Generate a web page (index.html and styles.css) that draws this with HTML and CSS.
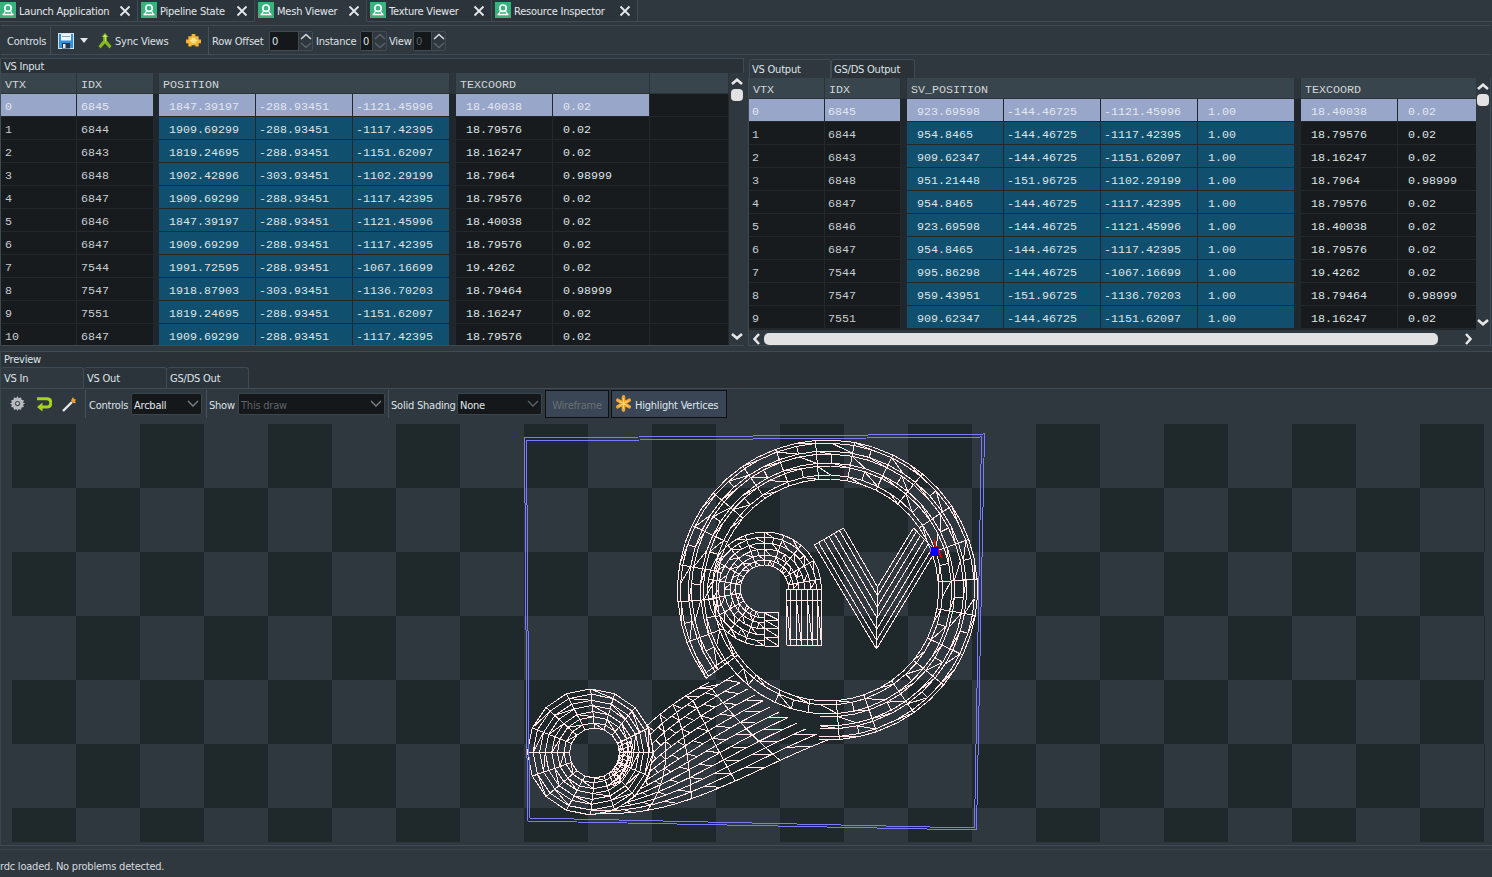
FILE: index.html
```html
<!DOCTYPE html>
<html lang="en">
<head>
<meta charset="utf-8">
<title>RenderDoc Mesh Viewer</title>
<link rel="stylesheet" href="styles.css">
</head>
<body>
<svg class="defs" width="0" height="0" aria-hidden="true">
  <symbol id="tabicon" viewBox="0 0 16 16">
    <rect width="16" height="16" fill="#3bb27b"/>
    <circle cx="8" cy="6.2" r="3.2" fill="none" stroke="#fff" stroke-width="1.7"/>
    <path d="M2.5 12.5h11" stroke="#fff" stroke-width="1.6"/>
    <path d="M3.5 12.5 5.5 9M12.5 12.5 10.5 9" stroke="#fff" stroke-width="1.2"/>
  </symbol>
  <symbol id="close" viewBox="0 0 12 12">
    <path d="M1.5 1.5 10.5 10.5M10.5 1.5 1.5 10.5" stroke="#e6e8ea" stroke-width="1.8" fill="none"/>
  </symbol>
  <symbol id="up" viewBox="0 0 12 7">
    <path d="M1 6 6 1.5 11 6" fill="none" stroke="currentColor" stroke-width="1.6"/>
  </symbol>
  <symbol id="down" viewBox="0 0 12 7">
    <path d="M1 1 6 5.5 11 1" fill="none" stroke="currentColor" stroke-width="1.6"/>
  </symbol>
  <symbol id="upb" viewBox="0 0 12 7">
    <path d="M1 6 6 1.7 11 6" fill="none" stroke="currentColor" stroke-width="2.6"/>
  </symbol>
  <symbol id="downb" viewBox="0 0 12 7">
    <path d="M1 1 6 5.300 11 1" fill="none" stroke="currentColor" stroke-width="2.6"/>
  </symbol>
</svg>

<nav class="tabbar">
  <div class="tab tab-a"><svg class="ticon"><use href="#tabicon"/></svg><span class="tlabel">Launch Application</span><svg class="tclose"><use href="#close"/></svg></div>
  <div class="tab tab-b"><svg class="ticon"><use href="#tabicon"/></svg><span class="tlabel">Pipeline State</span><svg class="tclose"><use href="#close"/></svg></div>
  <div class="tab tab-c active"><svg class="ticon"><use href="#tabicon"/></svg><span class="tlabel">Mesh Viewer</span><svg class="tclose"><use href="#close"/></svg></div>
  <div class="tab tab-d"><svg class="ticon"><use href="#tabicon"/></svg><span class="tlabel">Texture Viewer</span><svg class="tclose"><use href="#close"/></svg></div>
  <div class="tab tab-e"><svg class="ticon"><use href="#tabicon"/></svg><span class="tlabel">Resource Inspector</span><svg class="tclose"><use href="#close"/></svg></div>
</nav>

<section class="toolbar">
  <span class="lbl w-controls">Controls</span>
  <span class="sep"></span>
  <svg class="ic ic-save" viewBox="0 0 16 16"><rect x=".5" y=".5" width="15" height="15" fill="#2f8fe0" stroke="#cfe4f7"/><rect x="3" y="1" width="10" height="6.5" fill="#f4f7fa"/><rect x="4" y="3" width="8" height="1" fill="#7fa8cc"/><rect x="4" y="10" width="8" height="5.5" fill="#24384e"/><rect x="5" y="11" width="2.5" height="4" fill="#dfe8ef"/></svg>
  <svg class="ic ic-caret" viewBox="0 0 8 5"><path d="M0 0h8L4 5z" fill="#e4e6e8"/></svg>
  <svg class="ic ic-sync" viewBox="0 0 14 16"><path d="M7 0 10.500 4H8.800V7.500L13.500 13 11.500 15.500 7 10.500 2.500 15.500.5 13 5.200 7.500V4H3.500z" fill="#86b81f"/><path d="M7 1.500 8.800 3.800H7.800V8L7 9V3.800H5.200z" fill="#d4ec7c"/></svg>
  <span class="lbl w-sync">Sync Views</span>
  <svg class="ic ic-puzzle" viewBox="0 0 16 16"><path d="M6 1h4v2.500h3.500V7H16v4h-2.500v3.500H10V13H6v1.500H2.500V11H0V7h2.500V3.500H6z" fill="#f5b731"/><path d="M6 5h4v2h2v2h-2v2H6V9H4V7h2z" fill="#fbe08a"/></svg>
  <span class="sep sep-b"></span>
  <span class="lbl w-row">Row Offset</span>
  <div class="spin w-spin1"><span class="spin-val">0</span><span class="spin-btns"><svg><use href="#up"/></svg><svg class="dim"><use href="#down"/></svg></span></div>
  <span class="lbl w-inst">Instance</span>
  <div class="spin w-spin2"><span class="spin-val">0</span><span class="spin-btns"><svg class="dim"><use href="#up"/></svg><svg class="dim"><use href="#down"/></svg></span></div>
  <span class="lbl w-view">View</span>
  <div class="spin w-spin3"><span class="spin-val dimtext">0</span><span class="spin-btns"><svg><use href="#up"/></svg><svg class="dim"><use href="#down"/></svg></span></div>
</section>

<main class="panes">
  <section class="pane pane-left">
    <header class="pane-title">VS Input</header>
    <div class="grid-wrap">
      <div class="table left-table">
        <div class="row head"><span>VTX</span><span>IDX</span><span class="sp"></span><span class="s3">POSITION</span><span class="sp"></span><span class="s2">TEXCOORD</span><span class="end"></span></div>
        <div class="rows">
          <div class="row sel"><span>0</span><span>6845</span><span class="sp"></span><span class="b">1847.39197</span><span class="b n">-288.93451</span><span class="b n">-1121.45996</span><span class="sp"></span><span class="v">18.40038</span><span class="v">0.02</span><span class="end"></span></div>
          <div class="row"><span>1</span><span>6844</span><span class="sp"></span><span class="b">1909.69299</span><span class="b n">-288.93451</span><span class="b n">-1117.42395</span><span class="sp"></span><span class="v">18.79576</span><span class="v">0.02</span><span class="end"></span></div>
          <div class="row"><span>2</span><span>6843</span><span class="sp"></span><span class="b">1819.24695</span><span class="b n">-288.93451</span><span class="b n">-1151.62097</span><span class="sp"></span><span class="v">18.16247</span><span class="v">0.02</span><span class="end"></span></div>
          <div class="row"><span>3</span><span>6848</span><span class="sp"></span><span class="b">1902.42896</span><span class="b n">-303.93451</span><span class="b n">-1102.29199</span><span class="sp"></span><span class="v">18.7964</span><span class="v">0.98999</span><span class="end"></span></div>
          <div class="row"><span>4</span><span>6847</span><span class="sp"></span><span class="b">1909.69299</span><span class="b n">-288.93451</span><span class="b n">-1117.42395</span><span class="sp"></span><span class="v">18.79576</span><span class="v">0.02</span><span class="end"></span></div>
          <div class="row"><span>5</span><span>6846</span><span class="sp"></span><span class="b">1847.39197</span><span class="b n">-288.93451</span><span class="b n">-1121.45996</span><span class="sp"></span><span class="v">18.40038</span><span class="v">0.02</span><span class="end"></span></div>
          <div class="row"><span>6</span><span>6847</span><span class="sp"></span><span class="b">1909.69299</span><span class="b n">-288.93451</span><span class="b n">-1117.42395</span><span class="sp"></span><span class="v">18.79576</span><span class="v">0.02</span><span class="end"></span></div>
          <div class="row"><span>7</span><span>7544</span><span class="sp"></span><span class="b">1991.72595</span><span class="b n">-288.93451</span><span class="b n">-1067.16699</span><span class="sp"></span><span class="v">19.4262</span><span class="v">0.02</span><span class="end"></span></div>
          <div class="row"><span>8</span><span>7547</span><span class="sp"></span><span class="b">1918.87903</span><span class="b n">-303.93451</span><span class="b n">-1136.70203</span><span class="sp"></span><span class="v">18.79464</span><span class="v">0.98999</span><span class="end"></span></div>
          <div class="row"><span>9</span><span>7551</span><span class="sp"></span><span class="b">1819.24695</span><span class="b n">-288.93451</span><span class="b n">-1151.62097</span><span class="sp"></span><span class="v">18.16247</span><span class="v">0.02</span><span class="end"></span></div>
          <div class="row"><span>10</span><span>6847</span><span class="sp"></span><span class="b">1909.69299</span><span class="b n">-288.93451</span><span class="b n">-1117.42395</span><span class="sp"></span><span class="v">18.79576</span><span class="v">0.02</span><span class="end"></span></div>
        </div>
      </div>
      <div class="vscroll vscroll-left">
        <svg class="chev"><use href="#upb"/></svg>
        <span class="vthumb"></span>
        <span class="grow"></span>
        <svg class="chev"><use href="#downb"/></svg>
      </div>
    </div>
  </section>

  <section class="pane pane-right">
    <div class="subtabs">
      <span class="subtab active st-1">VS Output</span>
      <span class="subtab st-2">GS/DS Output</span>
    </div>
    <div class="grid-wrap right-wrap">
      <div class="table right-table">
        <div class="row head"><span>VTX</span><span>IDX</span><span class="sp"></span><span class="s4">SV_POSITION</span><span class="sp"></span><span class="s2">TEXCOORD</span></div>
        <div class="rows">
          <div class="row sel"><span>0</span><span>6845</span><span class="sp"></span><span class="b">923.69598</span><span class="b n">-144.46725</span><span class="b n">-1121.45996</span><span class="b">1.00</span><span class="sp"></span><span class="v">18.40038</span><span class="v">0.02</span></div>
          <div class="row"><span>1</span><span>6844</span><span class="sp"></span><span class="b">954.8465</span><span class="b n">-144.46725</span><span class="b n">-1117.42395</span><span class="b">1.00</span><span class="sp"></span><span class="v">18.79576</span><span class="v">0.02</span></div>
          <div class="row"><span>2</span><span>6843</span><span class="sp"></span><span class="b">909.62347</span><span class="b n">-144.46725</span><span class="b n">-1151.62097</span><span class="b">1.00</span><span class="sp"></span><span class="v">18.16247</span><span class="v">0.02</span></div>
          <div class="row"><span>3</span><span>6848</span><span class="sp"></span><span class="b">951.21448</span><span class="b n">-151.96725</span><span class="b n">-1102.29199</span><span class="b">1.00</span><span class="sp"></span><span class="v">18.7964</span><span class="v">0.98999</span></div>
          <div class="row"><span>4</span><span>6847</span><span class="sp"></span><span class="b">954.8465</span><span class="b n">-144.46725</span><span class="b n">-1117.42395</span><span class="b">1.00</span><span class="sp"></span><span class="v">18.79576</span><span class="v">0.02</span></div>
          <div class="row"><span>5</span><span>6846</span><span class="sp"></span><span class="b">923.69598</span><span class="b n">-144.46725</span><span class="b n">-1121.45996</span><span class="b">1.00</span><span class="sp"></span><span class="v">18.40038</span><span class="v">0.02</span></div>
          <div class="row"><span>6</span><span>6847</span><span class="sp"></span><span class="b">954.8465</span><span class="b n">-144.46725</span><span class="b n">-1117.42395</span><span class="b">1.00</span><span class="sp"></span><span class="v">18.79576</span><span class="v">0.02</span></div>
          <div class="row"><span>7</span><span>7544</span><span class="sp"></span><span class="b">995.86298</span><span class="b n">-144.46725</span><span class="b n">-1067.16699</span><span class="b">1.00</span><span class="sp"></span><span class="v">19.4262</span><span class="v">0.02</span></div>
          <div class="row"><span>8</span><span>7547</span><span class="sp"></span><span class="b">959.43951</span><span class="b n">-151.96725</span><span class="b n">-1136.70203</span><span class="b">1.00</span><span class="sp"></span><span class="v">18.79464</span><span class="v">0.98999</span></div>
          <div class="row"><span>9</span><span>7551</span><span class="sp"></span><span class="b">909.62347</span><span class="b n">-144.46725</span><span class="b n">-1151.62097</span><span class="b">1.00</span><span class="sp"></span><span class="v">18.16247</span><span class="v">0.02</span></div>
        </div>
      </div>
      <div class="vscroll vscroll-right">
        <svg class="chev"><use href="#upb"/></svg>
        <span class="vthumb"></span>
        <span class="grow"></span>
        <svg class="chev"><use href="#downb"/></svg>
      </div>
      <div class="hscroll">
        <svg class="hchev" viewBox="0 0 7 12"><path d="M6 1 1.500 6 6 11" fill="none" stroke="currentColor" stroke-width="2.600"/></svg>
        <span class="hthumb"></span>
        <svg class="hchev" viewBox="0 0 7 12"><path d="M1 1 5.500 6 1 11" fill="none" stroke="currentColor" stroke-width="2.600"/></svg>
      </div>
    </div>
  </section>
</main>

<section class="preview">
  <header class="pane-title preview-title">Preview</header>
  <div class="ptabs">
    <span class="ptab active pt-1">VS In</span>
    <span class="ptab pt-2">VS Out</span>
    <span class="ptab pt-3">GS/DS Out</span>
  </div>
  <div class="ptools">
    <svg class="pic pic-gear" viewBox="0 0 16 16"><path d="M8 0l1.300 2.300 2.500-.9.400 2.600 2.600.4-.9 2.500L16 8l-2.100 1.300.9 2.500-2.600.4-.4 2.600-2.500-.9L8 16l-1.300-2.100-2.500.9-.4-2.600-2.600-.4.9-2.500L0 8l2.100-1.100-.9-2.500 2.600-.4.4-2.600 2.500.9z" fill="#b9bcbf"/><circle cx="8" cy="8" r="2.800" fill="#4c5257"/><circle cx="8" cy="8" r="1.400" fill="#d8dadc"/></svg>
    <svg class="pic pic-arrow" viewBox="0 0 16 16"><path d="M1 2.800h10c3 0 3.800 1.700 3.800 4s-.8 4.200-3.800 4.200H4" fill="none" stroke="#a5d41c" stroke-width="3"/><path d="M6.500 6.500 1 11 6.500 15.500z" fill="#a5d41c"/></svg>
    <svg class="pic pic-wand" viewBox="0 0 16 16"><path d="M1 15 10 6" stroke="#e8e8e8" stroke-width="2.400"/><path d="M10 6 12.500 3.500" stroke="#8e8e8e" stroke-width="2"/><path d="M11 1l1 2 2 .5-1 2 1 1.500-2.500.2-1-1.500-1.500-1.200z" fill="#f0a030"/></svg>
    <span class="sep sep-p1"></span>
    <span class="lbl w-pctl">Controls</span>
    <div class="combo w-c1"><span>Arcball</span><svg class="cchev" viewBox="0 0 12 7"><path d="M1 1 6 6 11 1" fill="none" stroke="#7d8388" stroke-width="1.300"/></svg></div>
    <span class="sep sep-p2"></span>
    <span class="lbl w-show">Show</span>
    <div class="combo w-c2"><span class="dimtext">This draw</span><svg class="cchev" viewBox="0 0 12 7"><path d="M1 1 6 6 11 1" fill="none" stroke="#7d8388" stroke-width="1.300"/></svg></div>
    <span class="sep sep-p3"></span>
    <span class="lbl w-solid">Solid Shading</span>
    <div class="combo w-c3"><span>None</span><svg class="cchev" viewBox="0 0 12 7"><path d="M1 1 6 6 11 1" fill="none" stroke="#5d6368" stroke-width="1.300"/></svg></div>
    <button class="btn btn-wire" type="button"><span class="btn-text">Wireframe</span></button>
    <button class="btn btn-high" type="button"><svg class="star" viewBox="0 0 16 16"><path d="M8 8V1.800M8 8V14.200M8 8 13.400 4.900M8 8 13.400 11.100M8 8 2.600 4.900M8 8 2.600 11.100" stroke="#f0a32c" stroke-width="3.400" stroke-linecap="round" fill="none"/><path d="M8 8V2.500M8 8V13.500M8 8 12.700 5.300M8 8 12.700 10.700M8 8 3.300 5.300M8 8 3.300 10.700" stroke="#fbd67c" stroke-width="1" fill="none"/></svg><span class="btn-text">Highlight Vertices</span></button>
  </div>
  <div class="canvas" id="canvas">
    <svg class="mesh" id="mesh" viewBox="12 424 1472 418" aria-hidden="true"></svg>
  </div>
</section>

<footer class="status">rdc loaded. No problems detected.</footer>

<script src="mesh.js"></script>
</body>
</html>
```

FILE: styles.css
```css
* { box-sizing: border-box; }
html, body { margin: 0; padding: 0; }
body {
  width: 1492px;
  height: 877px;
  overflow: hidden;
  background: #2f373f;
  color: #d9dee2;
  font-family: "DejaVu Sans", sans-serif;
  font-stretch: condensed;
  font-size: 11px;
  line-height: 14px;
  letter-spacing: -0.22px;
  display: flex;
  flex-direction: column;
}
.defs { position: absolute; }

/* top document tabs */
.tabbar {
  height: 22px;
  flex: none;
  display: flex;
  border-bottom: 1px solid #3f4b54;
}
.tab {
  height: 22px;
  display: flex;
  align-items: center;
  border-right: 1px solid #3f4b54;
  border-bottom: 1px solid #3f4b54;
  background: #2c343b;
  position: relative;
}
.tab.active { background: #2f373f; border-bottom-color: #2f373f; }
.tab-a { width: 138px; }
.tab-b { width: 117px; padding-left: 3px; }
.tab-c { width: 112px; padding-left: 3px; }
.tab-d { width: 125px; padding-left: 3px; }
.tab-e { width: 146px; padding-left: 3px; }
.ticon { width: 16px; height: 16px; flex: none; margin-top: -1px; }
.tlabel { margin-left: 3px; padding-top: 3px; white-space: nowrap; color: #e3e7ea; flex: 1; }
.tclose { width: 12px; height: 12px; flex: none; margin-right: 6px; }

/* toolbars */
.toolbar {
  height: 30px;
  flex: none;
  margin: 3px 1px 0;
  display: flex;
  align-items: center;
  border-top: 1px solid #3f4b54;
  border-bottom: 1px solid #3f4b54;
  padding: 1px 0 0 6px;
}
.lbl { white-space: nowrap; color: #dde2e6; flex: none; padding-top: 2px; }
.sep { width: 1px; height: 28px; background: #46525b; flex: none; }
.w-controls { width: 43px; }
.ic { flex: none; }
.ic-save { width: 16px; height: 16px; margin-left: 7px; }
.ic-caret { width: 8px; height: 5px; margin-left: 6px; }
.ic-sync { width: 14px; height: 16px; margin-left: 10px; }
.w-sync { margin-left: 3px; width: 54px; }
.ic-puzzle { width: 15px; height: 15px; margin-left: 17px; }
.sep-b { margin-left: 7px; }
.w-row { margin-left: 3px; width: 56px; }
.spin {
  height: 20px;
  display: flex;
  flex: none;
  border: 1px solid #414b53;
  border-radius: 2px;
  background: #2f373f;
}
.spin-val {
  flex: 1;
  background: #15181b;
  padding: 3px 0 0 2px;
  color: #dfe3e6;
}
.spin-btns { width: 14px; display: flex; flex-direction: column; border-left: 1px solid #414b53; }
.spin-btns svg { width: 12px; height: 7px; margin: 1px 0 1px 1px; color: #d6dade; }
.spin-btns svg.dim { color: #59626a; }
.dimtext { color: #5f6468; }
.w-spin1 { width: 44px; margin-left: 1px; }
.w-inst { margin-left: 3px; width: 43px; }
.w-spin2 { width: 27px; margin-left: 1px; }
.w-view { margin-left: 2px; width: 23px; }
.w-spin3 { width: 33px; margin-left: 1px; }

/* upper panes */
.panes {
  flex: none;
  height: 288px;
  margin-top: 3px;
  display: flex;
}
.pane { height: 288px; display: flex; flex-direction: column; }
.pane-left {
  width: 744px;
  border: 1px solid #3f4b54;
  background: #2a3237;
}
.pane-right { width: 743px; margin-left: 4px; }
.pane-title {
  height: 14px;
  flex: none;
  padding: 1px 0 0 3px;
  background: #2a3238;
  color: #dfe4e8;
}
.grid-wrap { flex: 1; display: flex; min-height: 0; background: #2f373f; }
.table { display: flex; flex-direction: column; overflow: hidden; flex: none; background: #191d20; }
.left-table { width: 728px; }
.rows { flex: 1; overflow: hidden; background: #1f2629; }
.row {
  display: grid;
  column-gap: 1px;
  height: 23px;
  padding-bottom: 1px;
  font-family: "Liberation Mono", monospace;
  font-stretch: normal;
  font-size: 11.67px;
  letter-spacing: 0;
  line-height: 26px;
  color: #c9ced1;
  background: #22282c;
  white-space: nowrap;
}
.left-table .row { grid-template-columns: 75px 76px 4px 96px 96px 96px 5px 96px 96px 78px; }
.right-table .row { grid-template-columns: 75px 75px 5px 96px 96px 96px 96px 5px 96px 78px; }
.row > span { background: #171b1e; padding-left: 4px; overflow: hidden; }
.right-table .row > span { padding-left: 3px; }
.row > .sp { background: #1f272c; padding: 0; }
.row > .b, .row > .v { padding-left: 10px; color: #dfe4e4; }
.right-table .row > .b, .right-table .row > .v { padding-left: 10px; }
.row > .n, .right-table .row > .n { padding-left: 3px; }
.row > .b { background: #10506e; }
.row.sel > span { background: #98a6c9; color: #e2e7f1; }
.row.sel > .sp { background: #1f272c; }
.row.sel > .end { background: #171b1e; }
.row > .end { padding: 0; }
.row.head {
  height: 21px;
  padding: 0 0 1px;
  background: #2b3339;
  line-height: 25px;
  color: #d2d6d8;
  flex: none;
}
.row.head > span { background: #39454d; padding-left: 4px; }
.right-table .row.head > span { padding-left: 4px; }
.row.head > .sp, .right-table .row.head > .sp { background: #2c353b; padding: 0; }
.row.head > .end { background: #39454d; padding: 0; }
.s2 { grid-column: span 2; }
.s3 { grid-column: span 3; }
.s4 { grid-column: span 4; }

.vscroll {
  width: 14px;
  flex: none;
  display: flex;
  flex-direction: column;
  align-items: center;
  background: #2f373f;
}
.vscroll-left { margin-left: 1px; padding: 5px 0 5px; }
.vscroll-right { height: 252px; padding: 5px 0 4px; }
.chev { width: 12px; height: 7px; color: #e6e6e6; flex: none; }
.vthumb { width: 12px; height: 12px; background: #e2e2e2; border-radius: 4px; margin-top: 4px; flex: none; }
.grow { flex: 1; }

.subtabs { height: 20px; flex: none; display: flex; align-items: flex-end; padding-left: 1px; }
.subtab {
  height: 19px;
  padding: 3px 0 0 2px;
  border: 1px solid #3f4b54;
  border-bottom: 0;
  border-radius: 3px 3px 0 0;
  color: #dfe4e8;
  background: #2a3238;
  white-space: nowrap;
}
.subtab.active { background: #2f373f; }
.st-1 { width: 82px; }
.st-2 { width: 84px; }
.right-wrap {
  flex-wrap: wrap;
  align-content: flex-start;
  width: 743px;
  border: 1px solid #3f4b54;
  border-top: 0;
}
.right-table { width: 727px; height: 252px; }
.hscroll {
  width: 727px;
  height: 14px;
  margin-top: 2px;
  display: flex;
  align-items: center;
  color: #e6e6e6;
  padding-left: 4px;
}
.hchev { width: 7px; height: 12px; flex: none; }
.hthumb { width: 674px; height: 12px; background: #e2e2e2; border-radius: 5px; margin: 0 27px 0 4px; flex: none; }

/* preview */
.preview {
  flex: none;
  height: 495px;
  margin-top: 5px;
  display: flex;
  flex-direction: column;
  border-top: 1px solid #3f4b54;
  border-bottom: 1px solid #3f4b54;
  border-left: 1px solid #3a454d;
}
.preview-title { height: 15px; }
.ptabs {
  height: 22px;
  flex: none;
  display: flex;
  background: #2a3238;
  border-bottom: 1px solid #3f4b54;
  align-items: flex-end;
}
.ptab {
  height: 21px;
  padding: 4px 0 0 3px;
  border: 1px solid #3f4b54;
  border-bottom: 0;
  border-left: 0;
  border-radius: 3px 3px 0 0;
  color: #dfe4e8;
  background: #2c343b;
  white-space: nowrap;
}
.ptab.active { background: #2f373f; }
.pt-1 { width: 83px; }
.pt-2 { width: 83px; }
.pt-3 { width: 82px; }
.ptools {
  height: 35px;
  flex: none;
  display: flex;
  align-items: center;
  padding: 0 0 6px 0;
}
.ptools .lbl, .combo > span, .btn-text { padding-top: 4px; }
.pic { flex: none; }
.pic-gear { width: 15px; height: 15px; margin-left: 9px; }
.pic-arrow { width: 16px; height: 16px; margin-left: 11px; }
.pic-wand { width: 16px; height: 16px; margin-left: 10px; }
.sep-p1 { margin-left: 7px; }
.w-pctl { margin-left: 3px; width: 42px; }
.combo {
  height: 22px;
  flex: none;
  display: flex;
  align-items: center;
  justify-content: space-between;
  background: #15181b;
  border: 1px solid #3b454c;
  border-radius: 2px;
  padding: 0 1px 0 2px;
  color: #e2e6e8;
}
.cchev { width: 12px; height: 7px; margin-right: 1px; }
.w-c1 { width: 71px; }
.sep-p2 { margin-left: 4px; }
.w-show { margin-left: 2px; width: 29px; }
.w-c2 { width: 147px; }
.sep-p3 { margin-left: 3px; }
.w-solid { margin-left: 2px; width: 66px; }
.w-c3 { width: 85px; }
.btn {
  height: 28px;
  flex: none;
  margin-left: 3px;
  padding: 0;
  font: inherit;
  font-stretch: condensed;
  letter-spacing: inherit;
  background: #3a4656;
  border: 1px solid #0d0f11;
  color: #dfe6ee;
  display: flex;
  align-items: center;
  justify-content: center;
}
.btn-wire { width: 64px; color: #6a6f74; }
.btn-high { width: 116px; margin-left: 2px; justify-content: flex-start; padding-left: 3px; }
.star { width: 17px; height: 17px; flex: none; margin-right: 3px; }
.canvas {
  flex: 1;
  min-height: 0;
  margin: 0 7px 3px 11px;
  position: relative;
  background-color: #2f383e;
  background-image: conic-gradient(#2f383e 25%, #1f282b 0 50%, #2f383e 0 75%, #1f282b 0);
  background-size: 128px 128px;
}
.mesh { position: absolute; inset: 0; width: 100%; height: 100%; }

.status {
  flex: 1;
  padding-top: 10px;
  color: #d6dbdf;
  white-space: nowrap;
  border-top: 1px solid #3a454d;
  margin-top: 3px;
}
```

FILE: mesh.js
```javascript
(function () {
  var NS = 'http://www.w3.org/2000/svg';
  var svg = document.getElementById('mesh');
  var d = [];
  function L(a, b) { d.push('M' + a[0].toFixed(1) + ' ' + a[1].toFixed(1) + 'L' + b[0].toFixed(1) + ' ' + b[1].toFixed(1)); }
  function rad(x) { return x * Math.PI / 180; }
  function pol(c, r, a) { return [c[0] + r * Math.cos(rad(a)), c[1] + r * Math.sin(rad(a))]; }
  function lerp(a, b, t) { return [a[0] + (b[0] - a[0]) * t, a[1] + (b[1] - a[1]) * t]; }
  function bez(p, t) {
    var u = 1 - t;
    return [
      u*u*u*p[0][0] + 3*u*u*t*p[1][0] + 3*u*t*t*p[2][0] + t*t*t*p[3][0],
      u*u*u*p[0][1] + 3*u*u*t*p[1][1] + 3*u*t*t*p[2][1] + t*t*t*p[3][1]
    ];
  }
  var seed = 7;
  function rnd() { seed = (seed * 16807) % 2147483647; return seed / 2147483647; }

  /* band of a ring: radii list, angle list, triangulated */
  function band(cIn, cOut, radii, angles, radialEvery, skip) {
    var n = radii.length - 1;
    var every = radialEvery || 2;
    for (var i = 0; i < angles.length; i++) {
      var a = angles[i];
      var a2 = angles[i + 1];
      for (var j = 0; j <= n; j++) {
        var c = lerp(cOut, cIn, j / n);
        var r = radii[j];
        if (skip && skip(a, r)) continue;
        if (a2 !== undefined) L(pol(c, r, a), pol(c, r, a2));
        if (j < n) {
          var c2 = lerp(cOut, cIn, (j + 1) / n);
          if (i % every === 0 || (i + j) % 4 === 0) L(pol(c, r, a), pol(c2, radii[j + 1], a));
          if (a2 !== undefined && (i + j) % 3 === 0) L(pol(c, r, a), pol(c2, radii[j + 1], a2));
        }
      }
    }
  }
  function range(from, to, step, wob) {
    var out = [];
    for (var a = from; a <= to + 0.001; a += step) out.push(a + (wob ? (rnd() - 0.5) * wob : 0));
    return out;
  }

  /* big ring: close pairs of rings; the outer ones give way to the tail */
  band([827, 590], [827, 590], [150, 147, 139, 136, 127, 124, 115, 111], range(-215, 145, 7.5, 2), 2, function (a, r) {
    return a > 92 && a < 142 && r > 126;
  });

  /* small ring */
  band([594, 753], [590, 752], [63, 58, 52, 47, 41, 36, 30, 25], range(0, 360, 22.5), 1);
  band([594, 753], [590, 752], [41, 36, 30, 25], range(-15, 60, 7), 1);

  /* tail: a family of curves between the small ring and the big ring */
  var sc = [590, 752], bc = [827, 590];
  var U = [[668, 706], [690, 692]];
  var Bt = [[680, 818], [745, 772]];
  var rowsN = 12, colsN = 15;
  var curves = [];
  for (var v = 0; v <= rowsN; v++) {
    var f = v / rowsN;
    var endR = v === 0 ? 150 : 127 + 23 * f * f * f;
    var P = [
      pol(sc, 62, -25 + 105 * f),
      lerp(U[0], Bt[0], f),
      lerp(U[1], Bt[1], f),
      pol(bc, endR, 142 - 52 * f)
    ];
    var row = [];
    for (var u = 0; u <= colsN; u++) row.push(bez(P, u / colsN));
    curves.push(row);
  }
  for (v = 0; v <= rowsN; v++) {
    for (u = 0; u < colsN; u++) {
      L(curves[v][u], curves[v][u + 1]);
      if (v < rowsN) {
        if ((u + v) % 3 === 0) L(curves[v][u], curves[v + 1][u + 1]);
        if (u % 3 === 0) L(curves[v][u], curves[v + 1][u]);
      }
    }
  }

  /* letter a: arc */
  var ac = [764, 589];
  band(ac, ac, [57, 52, 46, 40, 34, 29, 24], range(-270, 0, 10), 2);
  [613, 620, 628, 637, 646].forEach(function (y, i, list) {
    L([764, y], [778, y === 613 ? 612 : y]);
    if (i < list.length - 1) L([764, y], [778, list[i + 1]]);
  });
  L([778, 612], [778, 646]);
  /* letter a: stem */
  var xs = [786, 790, 796, 801, 807, 812, 817, 821];
  L([786, 589], [821, 589]);
  L([786, 600], [821, 600]);
  L([786, 645], [821, 645]);
  L([790, 639], [817, 639]);
  xs.forEach(function (x, i) {
    L([x, 589], [x, 645]);
    if (i < xs.length - 1 && i % 2 === 0) L([x, 600], [xs[i + 1], 645]);
  });

  /* letter v: nested chevrons */
  var A = [814, 545], Bv = [843, 528], C = [913, 528], D = [935, 551];
  var low = [876, 649], high = [877, 587];
  var ts = [0, 0.14, 0.32, 0.5, 0.68, 0.86, 1];
  ts.forEach(function (t, i) {
    var l = lerp(A, Bv, t), m = lerp(low, high, t), r = lerp(D, C, t);
    L(l, m); L(m, r);
    if (i < ts.length - 1) {
      var nt = ts[i + 1];
      L(l, lerp(A, Bv, nt));
      L(r, lerp(D, C, nt));
      L(m, lerp(low, high, nt));
    }
  });

  var path = document.createElementNS(NS, 'path');
  path.setAttribute('d', d.join(''));
  path.setAttribute('fill', 'none');
  path.setAttribute('stroke', '#ffe8e6');
  path.setAttribute('stroke-width', '1');
  path.setAttribute('shape-rendering', 'crispEdges');
  svg.appendChild(path);

  /* frustum box */
  var box = document.createElementNS(NS, 'path');
  box.setAttribute('d', 'M524 438L984 434L976 830L527 821ZM526 441L981 437L974 828L529 818Z');
  box.setAttribute('fill', 'none');
  box.setAttribute('stroke', '#7a7aff');
  box.setAttribute('stroke-width', '1');
  box.setAttribute('shape-rendering', 'crispEdges');
  svg.appendChild(box);

  /* selected vertex marker */
  var red = document.createElementNS(NS, 'path');
  red.setAttribute('d', 'M934 539L935 548L938 548L941 558L936 548Z');
  red.setAttribute('fill', '#ff0000');
  red.setAttribute('stroke', '#ff0000');
  red.setAttribute('shape-rendering', 'crispEdges');
  svg.appendChild(red);
  var blue = document.createElementNS(NS, 'rect');
  blue.setAttribute('x', '930');
  blue.setAttribute('y', '547');
  blue.setAttribute('width', '8');
  blue.setAttribute('height', '9');
  blue.setAttribute('fill', '#0000ff');
  svg.appendChild(blue);
})();
```
